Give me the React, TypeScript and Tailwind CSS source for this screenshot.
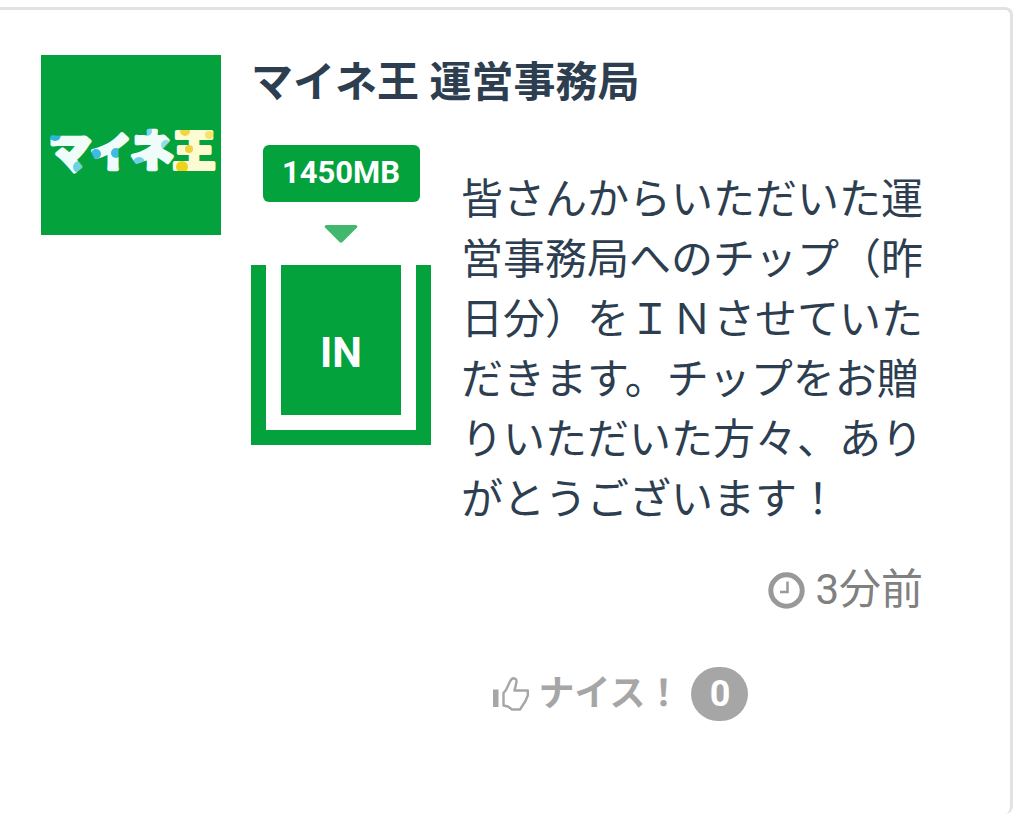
function Logo() {
  return (
    <svg
      viewBox="0 0 180 180"
      role="img"
      aria-label="マイネ王"
      className="h-[180px] w-[180px] shrink-0 bg-[#04a23d]"
    >
      <defs>
        <pattern id="dots" width="180" height="180" patternUnits="userSpaceOnUse">
          <rect width="180" height="180" fill="#f0fcfa" />
          <rect x="131" width="49" height="180" fill="#fdfbd2" />
          <circle cx="14" cy="80" r="6" fill="#2fb4dc" />
          <circle cx="45" cy="76" r="5" fill="#4cc0dc" />
          <circle cx="38" cy="112" r="6" fill="#6fd0e4" />
          <circle cx="55" cy="99" r="5" fill="#3dbbe0" />
          <circle cx="75" cy="98" r="5" fill="#3dbbe0" />
          <circle cx="106" cy="76" r="5" fill="#7fd3ea" />
          <circle cx="125" cy="90" r="5" fill="#8edcec" />
          <circle cx="98" cy="108" r="6" fill="#6fcfe6" />
          <circle cx="144" cy="76" r="5" fill="#f3d63c" />
          <circle cx="168" cy="80" r="4" fill="#f7e36a" />
          <circle cx="148" cy="94" r="4" fill="#f0cf3a" />
          <circle cx="141" cy="112" r="6" fill="#f0d21e" />
        </pattern>
      </defs>
      <g
        fill="url(#dots)"
        stroke="url(#dots)"
        strokeWidth="4"
        strokeLinejoin="round"
        className="font-['Noto_Sans_CJK_JP',sans-serif] font-black"
      >
        <text x="8" y="113" fontSize="42">マ</text>
        <text x="50" y="112" fontSize="40">イ</text>
        <text x="90" y="111" fontSize="42">ネ</text>
        <text x="132" y="111" fontSize="42">王</text>
      </g>
    </svg>
  );
}

function ClockIcon() {
  return (
    <svg viewBox="0 0 37 37" fill="none" stroke="#999999" className="h-[37px] w-[37px]" aria-hidden="true">
      <circle cx="18.5" cy="18.5" r="15.7" strokeWidth="5" />
      <path d="M19.5 9.5V20H12" strokeWidth="2.5" />
    </svg>
  );
}

function ThumbIcon() {
  return (
    <svg viewBox="0 0 36 34" fill="none" className="h-[34px] w-[36px]" aria-hidden="true">
      <path d="M0 12.5h5.5V30H0z" fill="#a6a6a6" />
      <path
        d="M10.5 16 13 13 17 4.5Q18.500 1.300 20.500 1.300Q23.800 1.500 23.500 5L21.500 13.500H34.800V18.500L32.500 24L27 32.500H19L15 29.500L10.500 28.500Z"
        stroke="#a6a6a6"
        strokeWidth="2.4"
        strokeLinejoin="round"
      />
    </svg>
  );
}

function ChipIn() {
  return (
    <div className="flex w-[180px] shrink-0 flex-col items-center">
      <span className="flex h-[57px] w-[157px] items-center justify-center rounded-md bg-[#04a23d] text-[31px] font-bold text-white">
        1450MB
      </span>
      <svg viewBox="0 0 34 18" className="mt-[23px] h-[18px] w-[34px]" aria-hidden="true">
        <path d="M2 0H32Q34 1 33 2.500L18.500 17Q17 18.500 15.500 17L1 2.500Q0 1 2 0Z" fill="#41b86d" />
      </svg>
      <div className="mt-[22px] flex h-[180px] w-full border-x-[15px] border-b-[15px] border-[#04a23d] px-[15px] pb-[15px]">
        <div className="flex flex-1 items-center justify-center bg-[#04a23d] pt-6 text-[42px] font-bold text-white">
          IN
        </div>
      </div>
    </div>
  );
}

export default function App() {
  return (
    <main className="flex min-h-screen bg-white pt-[7px] pr-[9px] font-[Roboto,'Noto_Sans_CJK_JP',sans-serif] text-[#2c3e50]">
      <article className="flex flex-1 items-start gap-[30px] rounded-r-lg border-t-[3px] border-r-[3px] border-[#e2e2e2] pt-[45px] pr-5 pl-[41px]">
        <Logo />

        <div className="min-w-0 flex-1">
          <h2 className="text-[42px] leading-[56px] font-bold">マイネ王 運営事務局</h2>

          <div className="mt-[34px] flex gap-[30px]">
            <ChipIn />
            <div className="min-w-0 flex-1 pt-[25px] pr-[67px]">
              <p className="text-[42px] leading-[60px]">
                皆さんからいただいた運営事務局へのチップ（昨日分）をＩＮさせていただきます。チップをお贈りいただいた方々、ありがとうございます！
              </p>
              <div className="mt-[30px] flex items-center justify-end gap-[10px] text-[42px] leading-[60px] text-[#808080]">
                <ClockIcon />
                <time>3分前</time>
              </div>
            </div>
          </div>

          {/* Like button */}
          <div className="mt-[47px] flex justify-center">
            <button type="button" className="flex items-center gap-[10px] text-[36px] leading-[54px] font-bold text-[#a6a6a6]">
              <ThumbIcon />
              <span>ナイス！</span>
              <span className="h-[54px] w-[57px] rounded-full bg-[#a6a6a6] text-center text-white">0</span>
            </button>
          </div>
        </div>
      </article>
    </main>
  );
}
